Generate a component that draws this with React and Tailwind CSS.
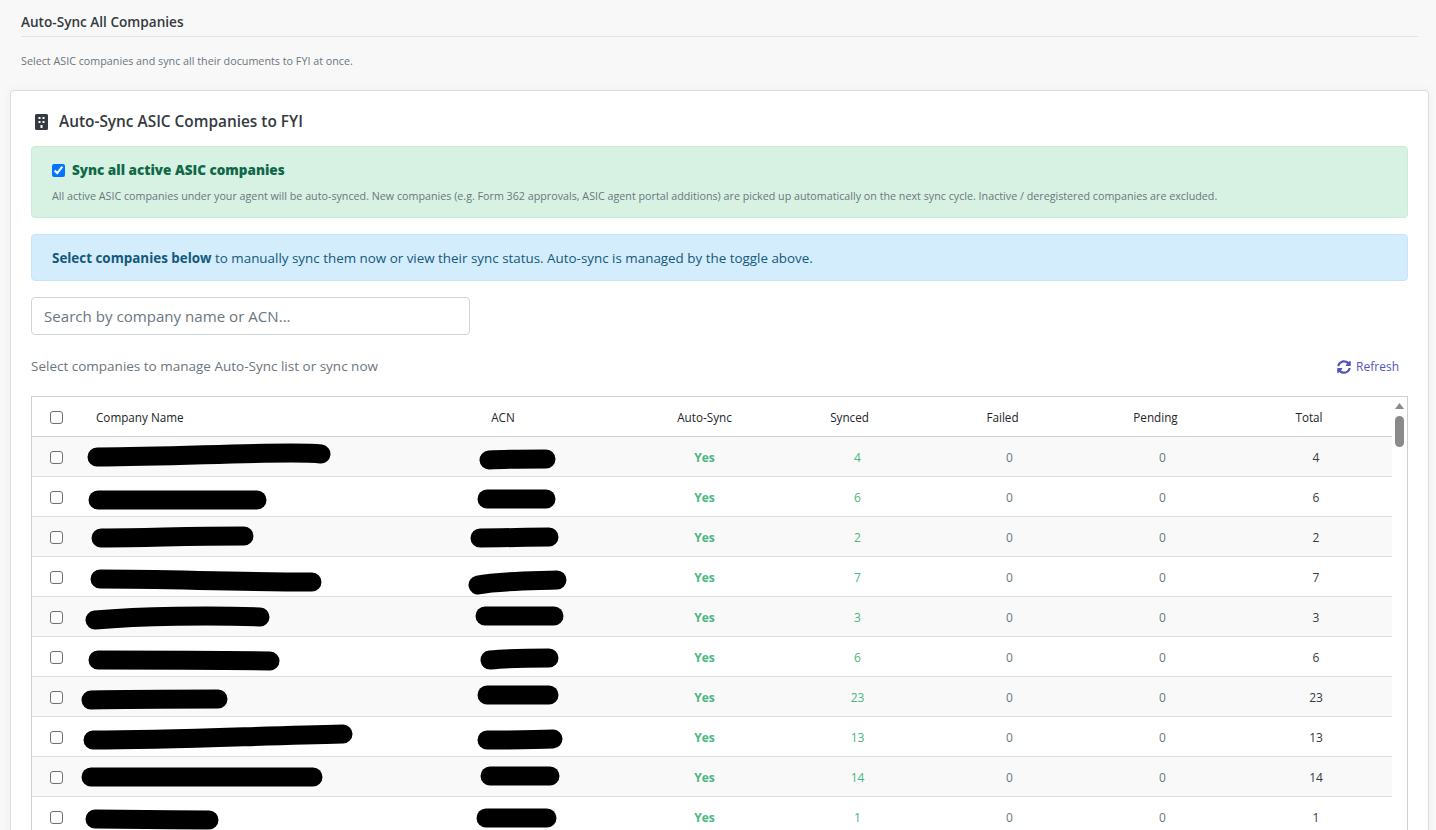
import { FaSyncAlt } from 'react-icons/fa';

const font = "font-['Open_Sans','Noto_Sans',sans-serif]";

// redaction scribbles, coordinates are relative to their table cell
const rows = [
  { name: 'M16 20C90 20 150 16 210 16C222 16 232 16 240 17', acn: 'M51 23C70 22 90 22 108 22', synced: 4, total: 4 },
  { name: 'M17 23L176 23', acn: 'M49 22L108 22', synced: 6, total: 6 },
  { name: 'M20 21C70 21 100 19 163 19', acn: 'M42 21C65 21 90 20 111 20', synced: 2, total: 2 },
  { name: 'M19 22C90 22 150 25 231 25', acn: 'M40 28C60 24 90 24 119 23', synced: 7, total: 7 },
  { name: 'M14 23C60 19 130 18 179 20', acn: 'M47 19L116 19', synced: 3, total: 3 },
  { name: 'M17 23C70 23 130 23 189 24', acn: 'M52 23C70 21 90 21 111 21', synced: 6, total: 6 },
  { name: 'M10 23C50 22 90 22 137 22', acn: 'M49 18L111 18', synced: 23, total: 23 },
  { name: 'M12 23C90 23 170 19 262 17', acn: 'M49 23C70 23 95 23 115 22', synced: 13, total: 13 },
  { name: 'M10 20L232 20', acn: 'M52 19L112 19', synced: 14, total: 14 },
  { name: 'M14 22C50 22 90 23 128 23', acn: 'M48 21L109 21', synced: 1, total: 1 },
];

const checkbox = 'block h-[13px] w-[13px] appearance-none rounded-[3px] border border-[#6f6f6f] bg-white';

function Scribble({ d, width }) {
  return (
    <svg width={width} height="39" className="block" aria-hidden="true">
      <path d={d} fill="none" stroke="#000" strokeWidth="19" strokeLinecap="round" />
    </svg>
  );
}

function CompanyRow({ row, index }) {
  return (
    <tr className={`h-10 border-b border-[#dddddd] ${index % 2 === 0 ? 'bg-[#f9f9f9]' : 'bg-white'}`}>
      <td className="w-[49px] pt-[2px] pl-[18px]"><input type="checkbox" className={checkbox} /></td>
      <td className="w-[357px] p-0"><Scribble d={row.name} width={357} /></td>
      <td className="w-[190px] p-0"><Scribble d={row.acn} width={190} /></td>
      <td className="w-[153px] pt-[4px] text-center text-xs font-bold text-[#48b77f]">Yes</td>
      <td className="w-[153px] pt-[4px] text-center text-xs text-[#48b77f]">{row.synced}</td>
      <td className="w-[153px] pt-[4px] pr-[2px] text-center text-xs text-[#6c757d]">0</td>
      <td className="w-[153px] pt-[4px] pr-[2px] text-center text-xs text-[#6c757d]">0</td>
      <td className="pt-[4px] text-center text-xs text-[#343a40]">{row.total}</td>
    </tr>
  );
}

export default function App() {
  return (
    <div className={`h-[830px] overflow-hidden bg-[#f8f8f8] ${font}`}>
      <div className="pt-[14px] pr-[18px] pl-[21px]">
        <h2 className="h-[23px] border-b border-[#e3e3e3] text-[13.6px] leading-[16px] font-semibold text-[#343a40]">Auto-Sync All Companies</h2>
        <p className="mt-[16px] text-[10.75px] leading-[16px] text-[#6c757d]">Select ASIC companies and sync all their documents to FYI at once.</p>
      </div>

      <div className="mt-[21px] mr-[7px] ml-[10px] rounded-[4px] border border-[#dcdcdc] bg-white px-5 pt-[20px] shadow-[0_0_8px_rgba(0,0,0,0.05)]">
        <div className="flex h-[22px] items-center gap-[11px] pl-[4px]">
          <svg width="13" height="16" viewBox="0 0 13 16" aria-hidden="true">
            <path fillRule="evenodd" fill="#343a40" d="M1.5 0h10A1.5 1.5 0 0 1 13 1.5v13a1.5 1.5 0 0 1-1.5 1.5h-10A1.5 1.5 0 0 1 0 14.5v-13A1.5 1.5 0 0 1 1.5 0ZM3.5 3v2h2V3h-2Zm4 0v2h2V3h-2Zm-4 4v2h2V7h-2Zm4 0v2h2V7h-2Zm-2 4v3h2v-3h-2Z" />
          </svg>
          <h3 className="text-[15.4px] font-semibold text-[#343a40]">Auto-Sync ASIC Companies to FYI</h3>
        </div>

        <div className="mt-[13px] h-[72px] rounded-[4px] border border-[#c9ecd9] bg-[#d7f2e3] px-5 pt-[13px]">
          <label className="flex h-[20px] items-center gap-[7px]">
            <input type="checkbox" defaultChecked className="h-[13px] w-[13px] accent-[#0075ff]" />
            <span className="text-[13.5px] font-extrabold text-[#0f6848]">Sync all active ASIC companies</span>
          </label>
          <p className="mt-[8px] text-[10.72px] leading-[16px] text-[#6c757d]">All active ASIC companies under your agent will be auto-synced. New companies (e.g. Form 362 approvals, ASIC agent portal additions) are picked up automatically on the next sync cycle. Inactive / deregistered companies are excluded.</p>
        </div>

        <div className="mt-4 flex h-[47px] items-center rounded-[4px] border border-[#c4e6f8] bg-[#d3edfc] px-5 pt-[2px] text-[13.4px] text-[#14587a]">
          <p><strong className="font-bold">Select companies below</strong> to manually sync them now or view their sync status. Auto-sync is managed by the toggle above.</p>
        </div>

        <input
          type="text"
          placeholder="Search by company name or ACN..."
          className="mt-4 block h-[38px] w-[439px] rounded-[4px] border border-[#ced4da] bg-white px-3 text-[15.1px] text-[#495057] placeholder:text-[#6c757d]"
        />

        <div className="mt-[18px] flex h-[26px] items-center justify-between pr-[9px]">
          <span className="text-[13.5px] text-[#6c757d]">Select companies to manage Auto-Sync list or sync now</span>
          <button type="button" className="flex items-center gap-[5px] pt-[2px] text-xs text-[#5156be]">
            <FaSyncAlt className="h-[14px] w-[14px]" />
            Refresh
          </button>
        </div>

        <div className="mt-[17px] flex border border-[#d0d0d0]">
          <table className="min-w-0 flex-1 table-fixed border-collapse">
            <thead>
              <tr className="h-[39px] border-b border-[#d0d0d0] text-[11.7px] text-[#212529]">
                <th className="w-[49px] pt-[2px] pl-[18px] font-medium"><input type="checkbox" className={checkbox} /></th>
                <th className="w-[357px] pt-[3px] pl-[15px] text-left font-medium">Company Name</th>
                <th className="w-[190px] pt-[3px] pr-[60px] text-center font-medium">ACN</th>
                <th className="w-[153px] pt-[3px] font-medium">Auto-Sync</th>
                <th className="w-[153px] pt-[3px] pr-[16px] font-medium">Synced</th>
                <th className="w-[153px] pt-[3px] pr-[16px] font-medium">Failed</th>
                <th className="w-[153px] pt-[3px] pr-[16px] font-medium">Pending</th>
                <th className="pt-[3px] pr-[14px] font-medium">Total</th>
              </tr>
            </thead>
            <tbody>
              {rows.map((row, i) => <CompanyRow key={i} row={row} index={i} />)}
            </tbody>
          </table>
          <div className="flex w-[15px] shrink-0 flex-col items-center pt-[6px]">
            <svg width="9" height="6" viewBox="0 0 9 6" aria-hidden="true"><path d="M4.5 0 9 6H0Z" fill="#8a8a8a" /></svg>
            <div className="mt-[7px] h-[31px] w-[9px] rounded-full bg-[#8a8a8a]" />
          </div>
        </div>
      </div>
    </div>
  );
}
